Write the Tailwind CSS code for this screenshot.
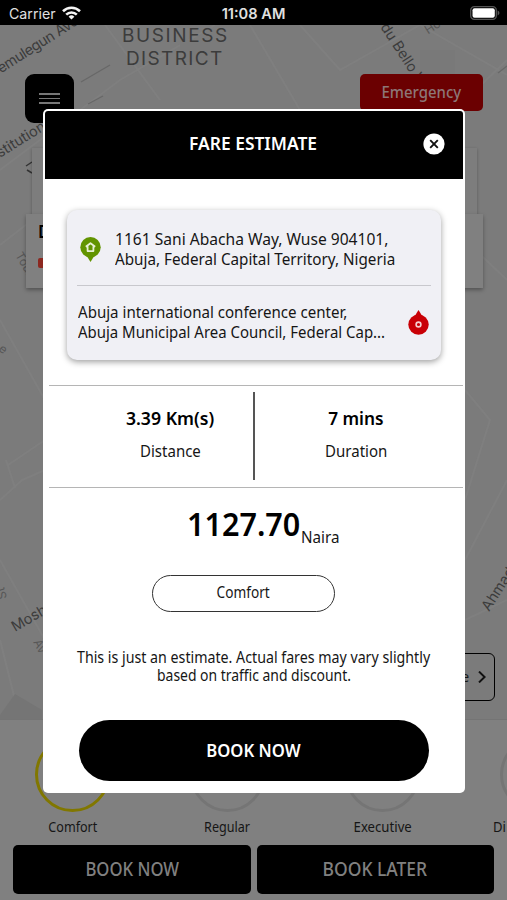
<!DOCTYPE html>
<html lang="en">
<head>
<meta charset="utf-8">
<title>Fare estimate</title>
<script src="https://cdn.jsdelivr.net/npm/@tailwindcss/browser@4"></script>
</head>
<body class="font-['Noto_Sans',sans-serif] text-[#161616]">
<div class="relative flex h-[900px] w-[507px] flex-col overflow-hidden bg-[#808080]">

  <!-- Status bar -->
  <header class="grid h-[25px] shrink-0 grid-cols-3 items-center bg-black px-[9px] pt-[3px] font-['Inter',sans-serif] text-[14.2px] leading-none text-[#e0e0e0]">
    <div class="flex items-center gap-[6px]">
      <span>Carrier</span>
      <svg class="mb-[2px] h-[14px] w-[19px]" viewBox="0 0 19 14" fill="none" stroke="#f4f4f4" stroke-width="2.6"><path d="M1 5.2a12.2 12.2 0 0 1 17 0M4.2 8.6a7.6 7.6 0 0 1 10.6 0"/><path d="M9.5 13.6 6.6 10.7a4.2 4.2 0 0 1 5.8 0z" fill="#f4f4f4" stroke="none"/></svg>
    </div>
    <div class="whitespace-nowrap text-center text-[14.6px] font-semibold">11:08 AM</div>
    <div class="flex justify-end">
      <svg class="-mr-[2px] mb-[2px] h-[14px] w-[30px]" viewBox="0 0 30 14"><rect x=".7" y=".7" width="25.6" height="12.6" rx="3.6" fill="none" stroke="#555" stroke-width="1.3"/><rect x="2.5" y="2.3" width="22.3" height="9.4" rx="2" fill="#fff"/><path d="M27.6 4.6c2.4.8 2.4 4 0 4.8z" fill="#555"/></svg>
    </div>
  </header>

  <!-- Map -->
  <main class="relative h-[694px] shrink-0 bg-[#7b7b7b]">
    <svg class="block h-[694px] w-[507px]" viewBox="0 25 507 694" font-family="Inter, sans-serif" fill="#3c3c3c">
      <g fill="none" stroke="#7f7f7f" stroke-width="2">
        <path d="M0 170 120 80 215 25M0 245 45 210M105 25 160 100M250 25 300 110M300 25 340 70 420 25M420 25 507 75M455 110 507 60M0 500 22 480 45 470M6 460 15 488M8 465 45 440M465 240 507 280M465 390 490 420 465 500M507 480 465 560M0 560 45 640M15 700 0 640M465 620 507 600M0 320 45 400"/>
      </g>
      <path d="M0 715 15 694 42 710V719H0z" fill="#757575"/>
      <path d="M180 40h30v22h-30zM420 50h35v24h-35z" fill="#797979"/>
      <path d="M81 82 110 65M88 104l15-8M498 73l9-7" stroke="#686868" stroke-width="1.3"/>
      <g font-size="19" letter-spacing="1.7">
        <text x="122" y="41.500" textLength="107">BUSINESS</text>
        <text x="126" y="65" textLength="98">DISTRICT</text>
      </g>
      <g font-size="14.500">
        <text transform="translate(1 73.500) rotate(-32.500)" textLength="93">emulegun Ave</text>
        <text transform="translate(0 158) rotate(-32)">stitution</text>
        <text transform="translate(380 27) rotate(57)">du Bello W</text>
        <text transform="translate(15 632) rotate(-30)">Mosh</text>
        <text transform="translate(489 612) rotate(-57)">Ahmad</text>
      </g>
      <g font-size="12" fill="#575757">
        <text transform="translate(428 34.500) rotate(-33)">Hos</text>
        <text transform="translate(15 255) rotate(60)">Tour</text>
        <text transform="translate(33 642) rotate(62)">Av</text>
        <text transform="translate(7 598) rotate(-105)">St</text>
        <text transform="translate(-2 350) rotate(40)">e</text>
      </g>
      <path d="M26 166l6-4M27 170l5 3" stroke="#333" stroke-width="1.500"/>
    </svg>

    <div class="absolute left-[25px] top-[49px] flex h-[49px] w-[49px] flex-col items-center justify-center gap-[3px] rounded-[9px] bg-black">
      <i class="h-[1.5px] w-[21px] bg-[#777]"></i><i class="h-[1.5px] w-[21px] bg-[#777]"></i><i class="h-[1.5px] w-[21px] bg-[#777]"></i>
    </div>
    <div class="absolute left-[360px] top-[49px] flex h-[37px] w-[122.5px] items-center justify-center rounded-[5px] bg-[#6b0001] pb-[2px] text-[17px] font-medium text-[#8d7777]"><span class="scale-x-[.88]">Emergency</span></div>

    <div class="absolute left-[32px] top-[123px] h-[90px] w-[445px] bg-[#7d7d7d] shadow-[0_1px_3px_#0004]"></div>
    <div class="absolute left-[26px] top-[189px] h-[74px] w-[457px] bg-[#808080] pl-[12px] pt-[6px] shadow-[0_2px_4px_#0005]">
      <div class="text-[17px] font-semibold leading-[24px] text-black">D</div>
      <div class="mt-[14px] h-[10px] w-[14px] rounded-[2px] bg-[#8c2820]"></div>
    </div>
    <div class="absolute left-[380px] top-[627.5px] flex h-[48px] w-[114.500px] items-center justify-end gap-[8px] rounded-[6px] border-[1.5px] border-black pr-[8px] text-[15px]"><span class="scale-x-90">e</span>
      <svg class="h-[12px] w-[8px]" viewBox="0 0 8 12" fill="none" stroke="#111" stroke-width="2"><path d="m1 .6 5.600 5.400L1 11.400"/></svg></div>
  </main>

  <!-- Vehicle classes -->
  <section class="flex h-[126px] shrink-0 border-t border-[#747474] pt-[16.500px] text-[14.800px] leading-[20px]">
    <div class="-ml-[5px] flex w-[155px] shrink-0 flex-col items-center gap-[4px]"><i class="size-[75px] rounded-full border-[3px] border-[#817700]"></i><span class="scale-x-[.85]">Comfort</span></div>
    <div class="flex w-[155px] shrink-0 flex-col items-center gap-[4px]"><i class="size-[75px] rounded-full border-[3px] border-[#757575]"></i><span class="scale-x-[.85]">Regular</span></div>
    <div class="flex w-[155px] shrink-0 flex-col items-center gap-[4px]"><i class="size-[75px] rounded-full border-[3px] border-[#757575]"></i><span class="scale-x-[.89]">Executive</span></div>
    <div class="flex w-[155px] shrink-0 flex-col gap-[4px]"><i class="ml-[40px] size-[75px] rounded-full border-[3px] border-[#757575]"></i><span class="ml-[33px] w-max origin-left scale-x-[.88]">Di</span></div>
  </section>

  <footer class="flex h-[49px] shrink-0 gap-[6px] px-[13px] text-[19px] font-medium text-[#808080]">
    <div class="flex flex-1 items-center justify-center rounded-[5px] bg-black"><span class="scale-x-[.88]">BOOK NOW</span></div>
    <div class="flex flex-1 items-center justify-center rounded-[5px] bg-black"><span class="scale-x-[.92]">BOOK LATER</span></div>
  </footer>

  <!-- Fare dialog -->
  <div class="absolute left-[42.500px] top-[108.500px] flex h-[684.500px] w-[422.500px] flex-col rounded-[5px] bg-white p-[2.500px] pt-[2px]">
    <div class="relative flex h-[68.500px] shrink-0 items-center justify-center rounded-t-[3px] bg-black pb-[4px] text-[18.500px] font-semibold text-white">
      <span class="-ml-[2px] scale-x-[.94] whitespace-nowrap">FARE ESTIMATE</span>
      <svg class="absolute right-[17.500px] top-[22px] size-[22px]" viewBox="0 0 22 22"><circle cx="11" cy="11" r="10.600" fill="#fff"/><path d="m7.200 7.200 7.600 7.600m0-7.600-7.600 7.600" stroke="#111" stroke-width="1.900"/></svg>
    </div>

    <div class="mx-[22px] mt-[31px] flex h-[150px] shrink-0 flex-col rounded-[10px] bg-[#f0f0f5] px-[10px] text-[16.500px] leading-[20px] shadow-[0_2px_6px_rgba(0,0,0,.38)]">
      <div class="flex h-[76px] items-center gap-[14px] border-b-[1.500px] border-[#c8c8cd] pt-[2px]">
        <svg class="ml-[3px] mt-[1px] h-[25px] w-[21px] shrink-0" viewBox="0 0 21 25"><circle cx="10.500" cy="10.300" r="10.200" fill="#629400"/><path d="M6.500 18.500 10.500 25l4-6.500z" fill="#629400"/><path d="m5.800 9.800 4.700-3.600 4.700 3.600M7.600 9.200v4.900h5.800V9.200" fill="none" stroke="#e8f0d5" stroke-width="1.800" stroke-linejoin="round"/></svg>
        <div class="w-[300px] whitespace-nowrap">
          <div class="w-max origin-left scale-x-[.945]">1161 Sani Abacha Way, Wuse 904101,</div>
          <div class="w-max origin-left scale-x-[.923]">Abuja, Federal Capital Territory, Nigeria</div>
        </div>
      </div>
      <div class="flex flex-1 items-center justify-between pb-[2px] pl-[1px] pr-[2px]">
        <div class="w-[310px] whitespace-nowrap">
          <div class="w-max origin-left scale-x-[.914]">Abuja international conference center,</div>
          <div class="w-max origin-left scale-x-[.906]">Abuja Municipal Area Council, Federal Cap...</div>
        </div>
        <svg class="h-[25px] w-[21px] shrink-0" viewBox="0 0 21 25"><circle cx="10.500" cy="14.600" r="10.200" fill="#c90006"/><path d="M6.500 6.500 10.500 0l4 6.500z" fill="#c90006"/><circle cx="10.500" cy="14.500" r="2.400" fill="none" stroke="#f5d0d0" stroke-width="1.600"/></svg>
      </div>
    </div>

    <div class="ml-[4px] mt-[24.500px] flex h-[103.500px] shrink-0 items-center border-y-[1.500px] border-[#b5b5b5]">
      <div class="flex h-[88px] w-[206px] flex-col items-center border-r-2 border-[#555] pl-[38px] pt-[14px]">
        <div class="scale-x-[.98] text-[18px] font-semibold leading-[24px] text-black">3.39 Km(s)</div>
        <div class="mt-[10px] scale-x-[.91] text-[16.500px] leading-[22px]">Distance</div>
      </div>
      <div class="flex h-[88px] flex-1 flex-col items-center pr-[6px] pt-[14px]">
        <div class="scale-x-[.96] text-[18px] font-semibold leading-[24px] text-black">7 mins</div>
        <div class="mt-[10px] scale-x-[.91] text-[16.500px] leading-[22px]">Duration</div>
      </div>
    </div>

    <div class="ml-[142px] mt-[14px] flex h-[44px] shrink-0 items-baseline whitespace-nowrap">
      <span class="w-[114px] origin-left scale-x-[.97] text-[31.500px] font-semibold leading-[44px] text-black">1127.70</span>
      <span class="relative top-[7px] origin-left scale-x-[.95] text-[16px] leading-[22px]">Naira</span>
    </div>

    <div class="ml-[107px] mt-[28.500px] flex h-[37px] w-[183px] shrink-0 items-center justify-center rounded-full border-[1.500px] border-[#333] text-[15.500px]"><span class="scale-x-[.88]">Comfort</span></div>

    <div class="mt-[36px] flex shrink-0 flex-col items-center whitespace-nowrap text-[15.500px] leading-[18.500px]">
      <div class="scale-x-[.917]">This is just an estimate. Actual fares may vary slightly</div>
      <div class="scale-x-[.898]">based on traffic and discount.</div>
    </div>

    <div class="mx-[34px] mb-[9.500px] mt-auto flex h-[61px] shrink-0 items-center justify-center rounded-full bg-black pb-[1px] text-[18.500px] font-semibold text-white"><span class="scale-x-[.9]">BOOK NOW</span></div>
  </div>
</div>
</body>
</html>
